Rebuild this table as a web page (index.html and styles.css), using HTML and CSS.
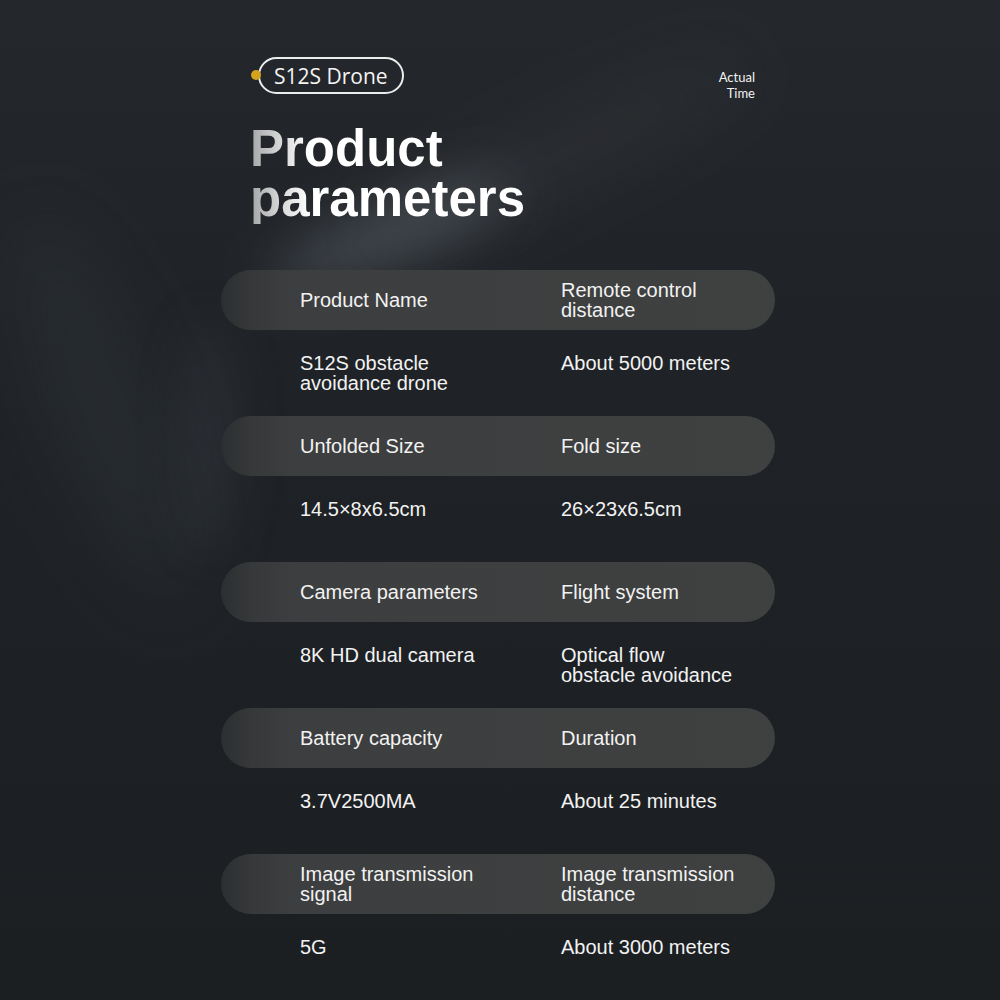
FILE: index.html
```html
<!DOCTYPE html>
<html lang="en">
<head>
<meta charset="utf-8">
<title>S12S Drone – Product parameters</title>
<link rel="stylesheet" href="styles.css">
</head>
<body>
<div class="glow glow-a"></div>
<div class="glow glow-d"></div>
<div class="glow glow-b"></div>
<div class="glow glow-c"></div>
<main class="page">
  <header class="top">
    <div class="pill"><span class="dot"></span>S12S Drone</div>
    <div class="actual">Actual<br>Time</div>
  </header>
  <h1 class="title"><span class="tl">Product</span><span class="tl">parameters</span></h1>
  <section class="specs">
    <div class="group">
      <div class="bar"><div class="cell">Product Name</div><div class="cell">Remote control<br>distance</div></div>
      <div class="vals"><div class="cell">S12S obstacle<br>avoidance drone</div><div class="cell">About 5000 meters</div></div>
    </div>
    <div class="group">
      <div class="bar"><div class="cell">Unfolded Size</div><div class="cell">Fold size</div></div>
      <div class="vals"><div class="cell">14.5×8x6.5cm</div><div class="cell">26×23x6.5cm</div></div>
    </div>
    <div class="group">
      <div class="bar"><div class="cell">Camera parameters</div><div class="cell">Flight system</div></div>
      <div class="vals"><div class="cell">8K HD dual camera</div><div class="cell">Optical flow<br>obstacle avoidance</div></div>
    </div>
    <div class="group">
      <div class="bar"><div class="cell">Battery capacity</div><div class="cell">Duration</div></div>
      <div class="vals"><div class="cell">3.7V2500MA</div><div class="cell">About 25 minutes</div></div>
    </div>
    <div class="group">
      <div class="bar"><div class="cell">Image transmission<br>signal</div><div class="cell">Image transmission<br>distance</div></div>
      <div class="vals"><div class="cell">5G</div><div class="cell">About 3000 meters</div></div>
    </div>
  </section>
</main>
</body>
</html>
```
FILE: styles.css
```css
html, body {
  margin: 0;
  padding: 0;
}
body {
  width: 1000px;
  height: 1000px;
  overflow: hidden;
  position: relative;
  background: linear-gradient(180deg, #24272b 0%, #1f2226 35%, #1c1f22 100%);
  font-family: "Liberation Sans", Arial, sans-serif;
  color: #f2f2f2;
}
.glow {
  position: absolute;
  pointer-events: none;
  border-radius: 50%;
}
.glow-a {
  left: 260px;
  top: 205px;
  width: 260px;
  height: 56px;
  background: rgba(125, 132, 140, 0.36);
  filter: blur(26px);
  transform: rotate(-22deg);
}
.glow-d {
  left: 330px;
  top: 130px;
  width: 440px;
  height: 60px;
  background: rgba(100, 106, 112, 0.16);
  filter: blur(34px);
  transform: rotate(-26deg);
}
.glow-b {
  left: 185px;
  top: 320px;
  width: 50px;
  height: 230px;
  background: rgba(80, 88, 96, 0.22);
  filter: blur(24px);
}
.glow-c {
  left: 50px;
  top: 200px;
  width: 110px;
  height: 420px;
  background: rgba(70, 78, 86, 0.2);
  filter: blur(40px);
  transform: rotate(-22deg);
}
.page {
  position: relative;
  margin-left: 221px;
  width: 554px;
  padding-top: 57px;
}
.top {
  display: flex;
  justify-content: space-between;
  align-items: flex-start;
}
.pill {
  position: relative;
  margin-left: 37px;
  height: 33px;
  padding: 0 14px;
  border: 2px solid #ececec;
  border-radius: 20px;
  display: flex;
  align-items: center;
  font-family: "Open Sans", "Noto Sans", sans-serif;
  font-size: 21px;
  color: #f4f4f4;
}
.dot {
  position: absolute;
  left: -9px;
  top: 11px;
  width: 10px;
  height: 10px;
  border-radius: 50%;
  background: #d6a21e;
}
.actual {
  margin-top: 12px;
  margin-right: 20px;
  text-align: right;
  font-family: "Lato", "Liberation Sans", sans-serif;
  font-size: 13px;
  line-height: 16px;
  color: #f2f2f2;
}
.title {
  margin: 23px 0 0 29px;
  width: fit-content;
  font-family: "Liberation Sans", Arial, sans-serif;
  font-weight: 700;
  font-size: 51px;
  line-height: 50px;
  background: linear-gradient(90deg, #a3a5a7 0px, #d6d6d6 30px, #ffffff 60px, #ffffff 100%);
  -webkit-background-clip: text;
  background-clip: text;
  color: transparent;
}
.tl {
  display: block;
  height: 50px;
}
.specs {
  margin-top: 46px;
}
.group {
  height: 146px;
}
.bar, .vals {
  display: grid;
  grid-template-columns: 261px 1fr;
  padding-left: 79px;
  font-size: 20px;
  line-height: 20px;
}
.bar {
  height: 60px;
  align-items: center;
  border-radius: 30px;
  background: linear-gradient(90deg, #2c2f31 0px, #363839 30px, #3d3e3f 75px, #3f4040 100%);
}
.vals {
  padding-top: 23px;
  align-items: start;
}
.cell {
  white-space: nowrap;
}
```
